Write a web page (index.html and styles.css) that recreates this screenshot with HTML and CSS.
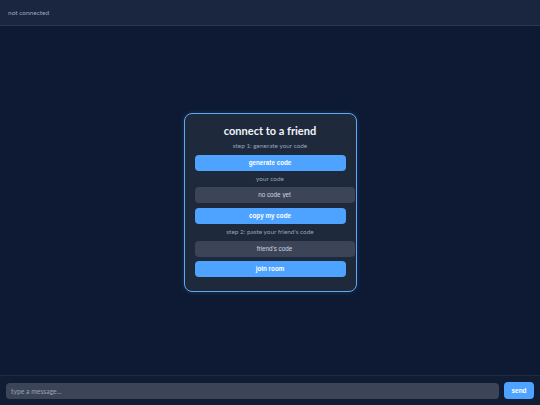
FILE: index.html
```html
<!DOCTYPE html>
<html>
<head>
<meta charset="utf-8">
<link rel="stylesheet" href="styles.css">
</head>
<body>
<div class="app">
  <header class="topbar">
    <span class="status">not connected</span>
  </header>
  <main class="main">
    <div class="card">
      <h2 class="title">connect to a friend</h2>
      <p class="label">step 1: generate your code</p>
      <button class="btn btn-gap">generate code</button>
      <p class="label">your code</p>
      <input class="field" type="text" value="no code yet" readonly>
      <button class="btn btn-tight">copy my code</button>
      <p class="label">step 2: paste your friend's code</p>
      <input class="field field-gap" type="text" placeholder="friend's code">
      <button class="btn">join room</button>
    </div>
  </main>
  <footer class="bottombar">
    <input class="msg" type="text" placeholder="type a message...">
    <button class="send">send</button>
  </footer>
</div>
</body>
</html>
```

FILE: styles.css
```css
* { box-sizing: border-box; }
html, body { margin: 0; padding: 0; }
body {
  background: #0e1a33;
  font-family: Lato, "Noto Sans", sans-serif;
  color: #e2e8f0;
}
.app {
  width: 540px;
  height: 405px;
  display: flex;
  flex-direction: column;
}
.topbar {
  height: 26px;
  background: #1a2640;
  border-bottom: 1px solid #2a3752;
  display: flex;
  align-items: center;
  padding: 0 8px;
}
.status {
  font-size: 6.5px;
  color: #9aa5b8;
}
.main {
  flex: 1;
  display: flex;
  align-items: center;
  justify-content: center;
  padding-top: 3px;
}
.card {
  width: 173px;
  background: #1e293b;
  border: 1px solid #5fa8f5;
  border-radius: 8px;
  box-shadow: 0 0 5px rgba(77, 163, 255, 0.2);
  padding: 10px 10px 14px;
  display: flex;
  flex-direction: column;
  gap: 4px;
  text-align: center;
}
.title {
  margin: 0;
  font-size: 11px;
  line-height: 14px;
  font-weight: 700;
  color: #f1f5f9;
}
.label {
  margin: 0;
  font-size: 6.4px;
  line-height: 8px;
  color: #94a3b8;
}
.btn {
  height: 16px;
  border: none;
  border-radius: 4px;
  background: #4da3ff;
  color: #ffffff;
  font-family: "Liberation Sans", Arial, sans-serif;
  font-weight: 700;
  font-size: 6.3px;
  padding: 0;
}
.btn-gap { margin-top: 1px; }
.btn-tight { margin-top: 1px; }
.field {
  box-sizing: content-box;
  width: 100%;
  height: 16px;
  padding: 0 4.5px;
  border: none;
  border-radius: 4px;
  background: #3b4557;
  color: #cbd5e1;
  font-family: "Liberation Sans", Arial, sans-serif;
  font-size: 6.3px;
  text-align: center;
  outline: none;
}
.field::placeholder { color: #cbd5e1; opacity: 1; }
.field-gap { margin-top: 1px; }
.bottombar {
  height: 30px;
  background: #111d35;
  border-top: 1px solid #1f2b45;
  display: flex;
  align-items: center;
  gap: 5px;
  padding: 0 6px;
}
.msg {
  flex: 1;
  height: 16px;
  border: none;
  border-radius: 4px;
  background: #3b4557;
  color: #cbd5e1;
  font-family: Lato, "Noto Sans", sans-serif;
  font-size: 6.8px;
  padding: 0 5px;
  outline: none;
}
.msg::placeholder { color: #94a3b8; }
.send {
  width: 30px;
  height: 17px;
  border: none;
  border-radius: 4px;
  background: #4da3ff;
  color: #ffffff;
  font-family: "Liberation Sans", Arial, sans-serif;
  font-weight: 700;
  font-size: 6.5px;
  padding: 0;
}
```
